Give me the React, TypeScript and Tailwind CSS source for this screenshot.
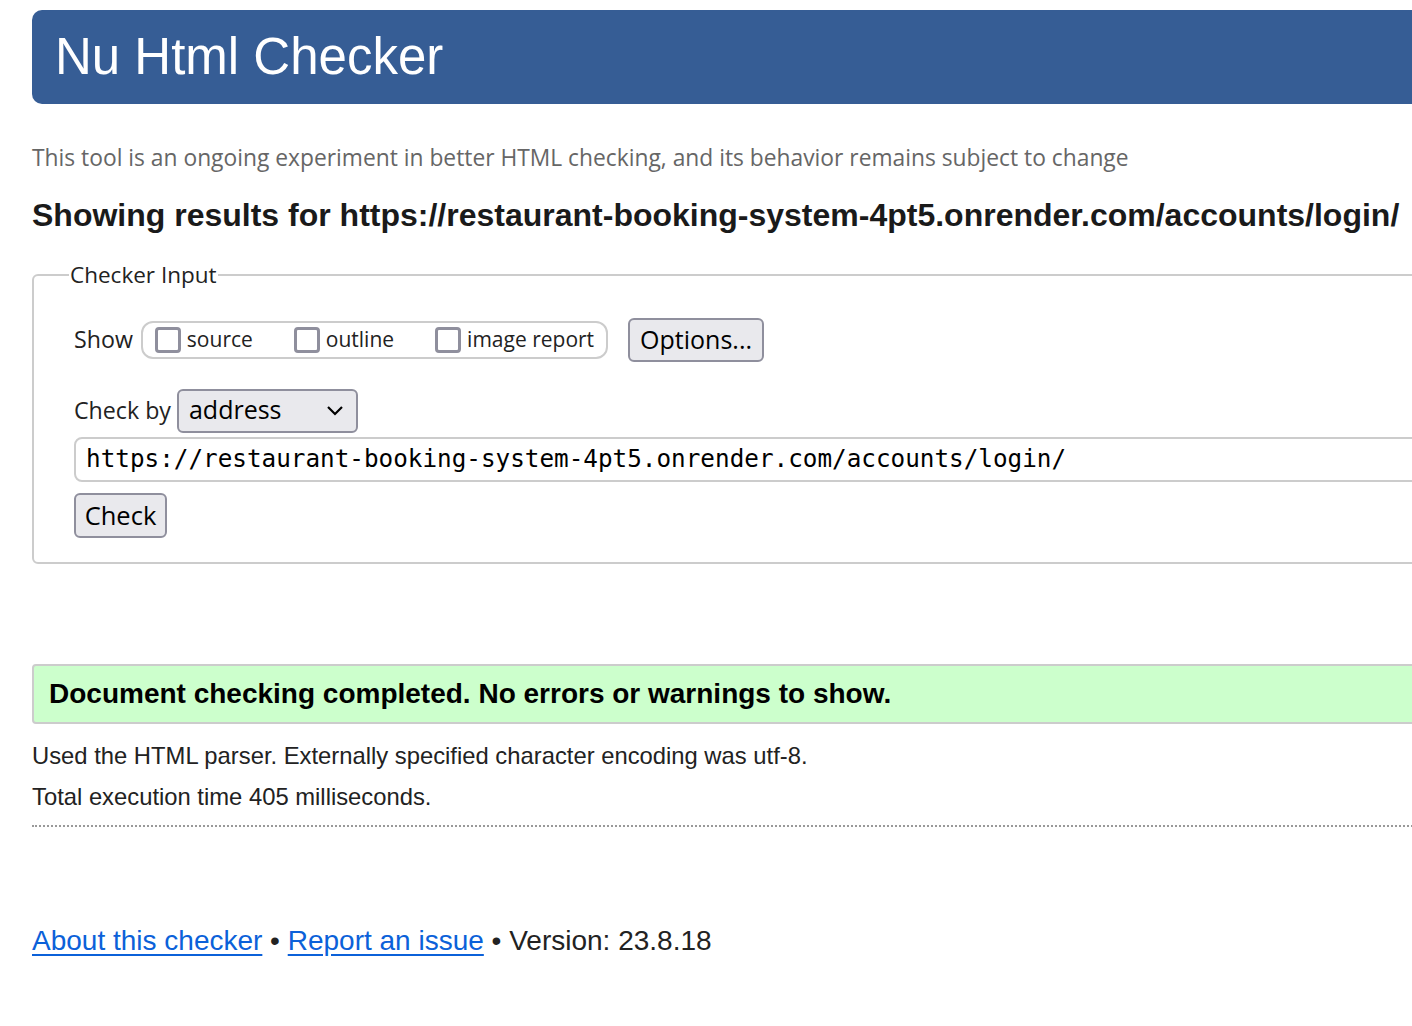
const sans = "font-['Open_Sans',sans-serif]";

const Box = ({ label }: { label: string }) => (
  <label className="flex items-center gap-[6px]">
    <span className="w-[26px] h-[26px] rounded-[4px] border-[3px] border-[#8f8f9d] bg-white" />
    <span>{label}</span>
  </label>
);

export default function App() {
  return (
    <div className="w-[1412px] h-[1026px] overflow-hidden bg-white">
      <div className="ml-[32px] w-[1500px] pt-[10px]">
        <header className="h-[94px] rounded-[10px] bg-[#365d95] flex items-center px-[23px]">
          <h1 className="text-white text-[51px] font-['Liberation_Sans',Arial,sans-serif] leading-none pb-[2px]">
            Nu Html Checker
          </h1>
        </header>

        <p className={`${sans} mt-[38px] text-[22.8px] text-[#666] leading-[32px]`}>
          This tool is an ongoing experiment in better HTML checking, and its behavior remains subject to change
        </p>
        <h2 className="mt-[22px] font-['Liberation_Sans',Arial,sans-serif] font-bold text-[32px] leading-[38px] text-[#1a1a1a]">
          Showing results for https://restaurant-booking-system-4pt5.onrender.com/accounts/login/
        </h2>

        <fieldset className={`${sans} mt-[24px] border-2 border-[#cccccc] rounded-[6px] px-[40px] pb-[24px] pt-[26px] text-[23.2px] text-[#222]`}>
          <legend className="ml-[-5px] px-[1px] text-[22.5px] text-[#222]">Checker Input</legend>
          <div className="flex items-center">
            <span className="mr-[8px]">Show</span>
            <div className="flex items-center gap-[41px] h-[38px] border-2 border-[#cccccc] rounded-[12px] pl-[12px] pr-[12px] text-[21px]">
              <Box label="source" />
              <Box label="outline" />
              <Box label="image report" />
            </div>
            <button className="ml-[20px] h-[44px] px-[10px] bg-[#e9e9ed] border-2 border-[#8f8f9d] rounded-[6px] text-[25px] text-black">
              Options...
            </button>
          </div>

          <div className="mt-[27px] flex items-center">
            <span className="mr-[6px]">Check by</span>
            <div className="w-[181px] h-[44px] bg-[#e9e9ed] border-2 border-[#8f8f9d] rounded-[6px] flex items-center justify-between pl-[10px] pr-[12px] text-[25px] text-black">
              <span className="leading-none pb-[2px]">address</span>
              <svg width="18" height="12" viewBox="0 0 18 12" fill="none" stroke="#000" strokeWidth="2.2">
                <path d="M2 2l7 7 7-7" />
              </svg>
            </div>
          </div>

          <div className="mt-[4px] h-[45px] border-2 border-[#cccccc] rounded-[8px] flex items-center px-[10px] font-['DejaVu_Sans_Mono',monospace] text-[24.3px] text-black">
            https://restaurant-booking-system-4pt5.onrender.com/accounts/login/
          </div>

          <button className="mt-[11px] h-[45px] w-[93px] bg-[#e9e9ed] border-2 border-[#8f8f9d] rounded-[6px] text-[25.5px] text-black">
            Check
          </button>
        </fieldset>

        <div className="mt-[100px] h-[60px] bg-[#ccffcc] border-2 border-[#cccccc] rounded-[4px] flex items-center px-[15px] font-['Liberation_Sans',Arial,sans-serif] font-bold text-[28px] text-black">
          Document checking completed. No errors or warnings to show.
        </div>

        <div className="font-['Liberation_Sans',Arial,sans-serif] text-[23.8px] text-[#222]">
          <p className="mt-[18px] leading-[28px]">Used the HTML parser. Externally specified character encoding was utf-8.</p>
          <p className="mt-[13px] leading-[28px]">Total execution time 405 milliseconds.</p>
          <div className="mt-[14px] border-b-2 border-dotted border-[#999]" />
          <p className="mt-[97px] text-[28px] leading-[34px]">
            <a href="#" className="text-[#0b61d9] underline underline-offset-[4px]">About this checker</a>
            {" • "}
            <a href="#" className="text-[#0b61d9] underline underline-offset-[4px]">Report an issue</a>
            {" • Version: 23.8.18"}
          </p>
        </div>
      </div>
    </div>
  );
}
